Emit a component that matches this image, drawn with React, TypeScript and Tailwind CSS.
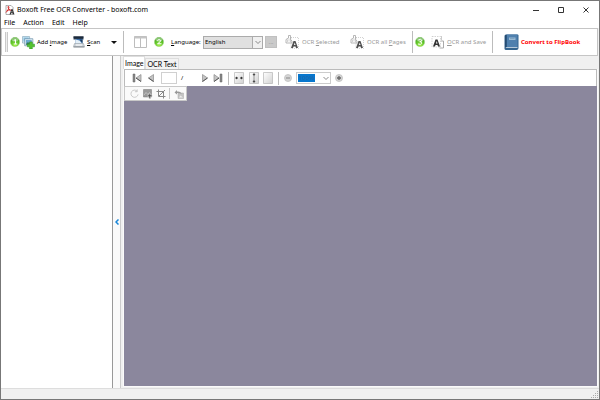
import React, { useState } from "react";

const menuFont = "font-['Noto_Sans','Open_Sans',sans-serif] text-[7px] leading-[10px] whitespace-nowrap";
const toolFont = "font-['Noto_Sans','Open_Sans',sans-serif] text-[6px] leading-[10px] whitespace-nowrap";
const tabFont = "font-['Lato','Noto_Sans',sans-serif] text-[7px] leading-[10px] whitespace-nowrap";

function HelpBadge({ n }: { n: string }) {
  return (
    <button aria-label={`Step ${n}`} className="h-[10px] w-[10px] shrink-0">
      <svg viewBox="0 0 20 20" className="block h-full w-full">
        <defs>
          <radialGradient id={`g${n}`} cx="50%" cy="85%" r="85%">
            <stop offset="0" stopColor="#a4f04c" />
            <stop offset="0.5" stopColor="#62c62a" />
            <stop offset="1" stopColor="#3f9a28" />
          </radialGradient>
        </defs>
        <circle cx="10" cy="10" r="9.3" fill={`url(#g${n})`} stroke="#a5d685" />
        <ellipse cx="10" cy="5.500" rx="6.500" ry="3.800" fill="#fff" opacity="0.35" />
        {n === "1" && <path d="M7.500 7l3.500-2v9M7.500 14h7" fill="none" stroke="#fff" strokeWidth="2" />}
        {n === "2" && <path d="M6.500 7q3.500-4 7 0q0 2.500-6.500 6.500h8" fill="none" stroke="#fff" strokeWidth="2" />}
        {n === "3" && <path d="M6.500 6q6-3 7 .5q0 3-4 3q5 0 4 3.500q-2 3-7.500 1" fill="none" stroke="#fff" strokeWidth="2" />}
      </svg>
    </button>
  );
}

function AppIcon() {
  return (
    <svg viewBox="0 0 20 20" className="h-[10px] w-[10px] shrink-0">
      <path d="M2 .8h10l4 4V19H2z" fill="#fff" stroke="#777" strokeWidth="1.200" />
      <path d="M6 3c4-1 1 7-4 12M6 3c0 5 3 8 9 8M3 12q5-3 8-2" fill="none" stroke="#d22424" strokeWidth="1.900" />
      <path d="M9 19l4-11h2l4 11h-3l-.7-2.500h-3L11.600 19zM13 14.500h2l-1-3.500z" fill="#333" />
    </svg>
  );
}

function AddImageIcon() {
  return (
    <svg viewBox="0 0 24 24" className="h-[13px] w-[13px] shrink-0">
      <path d="M1 1h13v12H1z" fill="#eaf5fb" stroke="#86aabd" strokeWidth="1.300" />
      <path d="M2.500 2.500h10v8h-10z" fill="#8ec5e3" />
      <path d="M5 5h15v13H5z" fill="#f2f9fd" stroke="#668fa7" strokeWidth="1.300" />
      <path d="M7 7h11v9H7z" fill="#6ca9ce" />
      <path d="M7 15l4-4 3 3 4-4v6H7z" fill="#3d7c59" />
      <path d="M14 11h5v4h4v5h-4v4h-5v-4h-4v-5h4z" fill="#56c42f" stroke="#2b9222" />
    </svg>
  );
}

function ScanIcon() {
  return (
    <svg viewBox="0 0 24 24" className="h-[12px] w-[12px] shrink-0">
      <path d="M1 1h20v6H1z" fill="#26384c" />
      <path d="M1 1h20v2H1z" fill="#111d2c" />
      <path d="M5 6h14v10H5z" fill="#3a6fae" />
      <path d="M5 7l8 2 6 7H5z" fill="#e3eff8" />
      <path d="M13 7h6v7z" fill="#21405f" />
      <path d="M3 15h18l2 6H1z" fill="#cfd6dc" stroke="#8b949b" />
      <path d="M6 17h12v2H6z" fill="#fff" />
      <path d="M1 21h22v2H1z" fill="#7d858c" />
    </svg>
  );
}

function SelectOcrIcon({ page = false }: { page?: boolean }) {
  return (
    <svg viewBox="0 0 28 28" className="h-[14px] w-[14px] shrink-0">
      {page ? (
        <g>
          <path d="M2 3h17v21H2z" fill="#fff" stroke="#a8a8a8" strokeDasharray="3 2" />
          <path d="M20 12h5v14h-8" fill="none" stroke="#aaa" strokeWidth="2" />
          <path d="M21 2v8" stroke="#bbb" strokeWidth="1.500" />
        </g>
      ) : (
        <g fill="none" stroke="#a5a5a5">
          <path d="M2 16V9l5-3V1h4v8l3 3v4z" strokeWidth="1.600" />
          <path d="M12 5h15v22H12z" strokeDasharray="2 2" />
          <path d="M5 9v5M8 7v6M11 9v5" />
        </g>
      )}
      <path transform={page ? "translate(-8 -3)" : undefined} d="M12 26l5-14h4l5 14h-4l-1-3h-4l-1 3zM18 20h3l-1.500-5z" fill={page ? "#333" : "#505050"} />
    </svg>
  );
}

function BookIcon() {
  return (
    <svg viewBox="0 0 30 34" className="h-[17px] w-[15px] shrink-0">
      <path d="M4 1h23q2 0 2 2v25q0 4-4 4H4q-3 0-3-3V4q0-3 3-3z" fill="#35658f" />
      <path d="M6 1h21v25H6z" fill="#4f80ae" />
      <path d="M2 4q0-2 3-3v26q-3 0-3 2z" fill="#254b71" />
      <path d="M3 28q0-2 3-2h21v2H5z" fill="#b7c9d9" />
      <path d="M10 7h13v5H10z" fill="#9abbd4" />
      <path d="M12 8h9v1h-9z" fill="#6089ae" />
    </svg>
  );
}

function Arrow({ back = false, bar = false }: { back?: boolean; bar?: boolean }) {
  return (
    <svg viewBox="0 0 20 20" className="block h-[10px] w-[10px]">
      <g transform={back ? "translate(20 0) scale(-1 1)" : undefined}>
        <path d={bar ? "M2 3l10 7-10 7z" : "M5 3l10 7-10 7z"} fill="#c4c4c4" stroke="#909090" strokeWidth="1.500" />
        <path d={bar ? "M2 17l10-7" : "M5 17l10-7"} stroke="#555" strokeWidth="2" />
        {bar && <path d="M14 2h4v16h-4z" fill="#888" stroke="#666" />}
      </g>
    </svg>
  );
}

function FitIcon({ kind }: { kind: "width" | "height" | "page" }) {
  return (
    <svg viewBox="0 0 20 24" className="block h-[12px] w-[10px]">
      <defs>
        <linearGradient id={kind} x1="0" y1="0" x2="1" y2="1">
          <stop offset="0" stopColor="#fff" />
          <stop offset="1" stopColor="#d2d2d2" />
        </linearGradient>
      </defs>
      <path d="M1 1h18v22H1z" fill={`url(#${kind})`} stroke="#b0b0b0" strokeWidth="1.300" />
      {kind === "width" && <path d="M2 12l4-3v2h2v2H6v2zM18 12l-4-3v2h-2v2h2v2z" fill="#333" />}
      {kind === "height" && <path d="M10 2l3 4h-2v3H9V6H7zM10 22l3-4h-2v-3H9v3H7zM9 11h2v2H9z" fill="#444" />}
    </svg>
  );
}

function ZoomIcon({ plus = false }: { plus?: boolean }) {
  return (
    <svg viewBox="0 0 16 16" className="block h-[8px] w-[8px]">
      <circle cx="8" cy="8" r="7" fill="#d5d5d5" stroke="#bdbdbd" strokeWidth="1.500" />
      <path d={plus ? "M4 8h8M8 4v8" : "M4 8h8"} stroke={plus ? "#666" : "#999"} strokeWidth="2.600" />
    </svg>
  );
}

function Chevron() {
  return (
    <svg viewBox="0 0 12 12" className="pointer-events-none h-[6px] w-[6px]">
      <path d="M1 4l5 5 5-5" fill="none" stroke="#666" strokeWidth="1.500" />
    </svg>
  );
}

function Separator() {
  return <div className="h-[22px] w-px shrink-0 bg-[#bcbcbc]" />;
}

function TitleBar() {
  return (
    <header className={`flex h-[17px] shrink-0 items-center bg-white pr-px pl-1 ${menuFont}`}>
      <AppIcon />
      <h1 className="ml-[2px] font-normal">Boxoft Free OCR Converter - boxoft.com</h1>
      <div className="ml-auto flex h-full">
        <button aria-label="Minimize" className="flex w-[25px] items-center justify-center">
          <svg viewBox="0 0 8 8" className="h-2 w-2"><path d="M1 4.500h6" stroke="#333" /></svg>
        </button>
        <button aria-label="Maximize" className="flex w-[25px] items-center justify-center">
          <svg viewBox="0 0 8 8" className="h-2 w-2"><path d="M1.500 1.500h5v5h-5z" fill="none" stroke="#333" /></svg>
        </button>
        <button aria-label="Close" className="flex w-[25px] items-center justify-center">
          <svg viewBox="0 0 8 8" className="h-2 w-2"><path d="M1.500 1.500l5 5m0-5l-5 5" stroke="#333" /></svg>
        </button>
      </div>
    </header>
  );
}

function MainToolbar() {
  return (
    <div className={`mr-px flex h-[28px] shrink-0 items-center border border-[#c5c5c5] bg-white pl-[3px] ${toolFont}`}>
      <div className="h-5 w-[3px] border-x border-[#c9c9c9] bg-[#eee]" />
      <div className="flex w-[115px] items-center pl-[2px]">
        <HelpBadge n="1" />
        <button className="ml-[2px] flex w-[51px] items-center gap-[2px]">
          <AddImageIcon />
          <span>Add <u>i</u>mage</span>
        </button>
        <button className="flex w-[38px] items-center gap-[2px]">
          <ScanIcon />
          <span><u>S</u>can</span>
        </button>
        <button aria-label="Scan options" className="h-[3px] w-[6px]">
          <svg viewBox="0 0 6 3" className="block h-full w-full"><path d="M0 0h6L3 3z" fill="#111" /></svg>
        </button>
      </div>
      <Separator />
      <button aria-label="Page layout" className="ml-[10px] h-[12px] w-[13px]">
        <svg viewBox="0 0 26 24" className="block h-full w-full">
          <path d="M1 1h24v22H1zM13 4v19" fill="#fff" stroke="#bdbdbd" strokeWidth="2" />
          <path d="M1 1h24v4H1z" fill="#c4c4c4" />
        </svg>
      </button>
      <div className="ml-[7px] flex w-[17px]"><HelpBadge n="2" /></div>
      <label htmlFor="language" className="w-[32px]"><u>L</u>anguage:</label>
      <div className="grid w-[60px] grid-cols-1">
        <select id="language" className="col-start-1 row-start-1 h-[13px] appearance-none rounded-none border border-[#ababab] bg-[#e0e0e0] pl-px">
          <option>English</option>
        </select>
        <div className="pointer-events-none col-start-1 row-start-1 flex w-[11px] items-center justify-center justify-self-end border border-[#ababab] bg-[#f0f0f0]">
          <Chevron />
        </div>
      </div>
      <button aria-label="Language settings" className="ml-[2px] h-[12px] w-[12px] border border-[#c0c0c0] bg-[#cacaca] leading-[6px] text-[#999]">...</button>
      <button className="ml-[8px] flex w-[65px] items-center gap-[3px] text-[#999]">
        <SelectOcrIcon />
        <span>OCR <u>S</u>elected</span>
      </button>
      <button className="flex w-[62px] items-center gap-[3px] text-[#999]">
        <SelectOcrIcon />
        <span>OCR all <u>P</u>ages</span>
      </button>
      <Separator />
      <div className="ml-[2px] flex w-[16px]"><HelpBadge n="3" /></div>
      <button className="flex w-[61px] items-center gap-[2px] text-[#999]">
        <SelectOcrIcon page />
        <span><u>O</u>CR and Save</span>
      </button>
      <Separator />
      <button className="ml-[11px] flex items-center gap-[2px] font-bold text-[#ff0000]">
        <BookIcon />
        <span>Convert to FlipBook</span>
      </button>
    </div>
  );
}

function PageToolbar() {
  return (
    <div className={`flex h-[17px] shrink-0 items-center border border-b-0 border-[#bbb] bg-white ${toolFont}`}>
      <button aria-label="First page" className="ml-[7px]"><Arrow back bar /></button>
      <button aria-label="Previous page" className="ml-[4px]"><Arrow back /></button>
      <input aria-label="Page number" className="ml-[5px] h-[12px] w-[16px] border border-[#d0d0d0] bg-white" />
      <span className="ml-[4px] w-[19px]">/</span>
      <button aria-label="Next page"><Arrow /></button>
      <button aria-label="Last page" className="ml-[3px]"><Arrow bar /></button>
      <div className="mx-[5px] h-[13px] w-px bg-[#bbb]" />
      <button aria-label="Fit width"><FitIcon kind="width" /></button>
      <button aria-label="Fit height" className="ml-[5px]"><FitIcon kind="height" /></button>
      <button aria-label="Fit page" className="ml-[4px]"><FitIcon kind="page" /></button>
      <div className="mx-[5px] h-[13px] w-px bg-[#bbb]" />
      <button aria-label="Zoom out"><ZoomIcon /></button>
      <div className="ml-[4px] grid w-[35px] grid-cols-1">
        <select aria-label="Zoom level" className="col-start-1 row-start-1 h-[12px] appearance-none rounded-none border border-[#ccc] bg-white pl-[3px] text-transparent">
          <option>100%</option>
        </select>
        <div className="pointer-events-none col-start-1 row-start-1 ml-[2px] h-[8px] w-[17px] self-center bg-[#0877ce] text-center leading-[8px] text-[#2465a2]">100%</div>
        <div className="pointer-events-none col-start-1 row-start-1 mr-[2px] self-center justify-self-end"><Chevron /></div>
      </div>
      <button aria-label="Zoom in" className="ml-[4px]"><ZoomIcon plus /></button>
    </div>
  );
}

function EditToolbar() {
  return (
    <div className="flex h-[15px] w-[63px] items-center border border-[#c8c8c8] bg-[#fafafa] pl-[5px]">
      <button aria-label="Rotate" className="h-[9px] w-[9px]">
        <svg viewBox="0 0 20 20" className="block h-full w-full"><path d="M16 5A8 8 0 1 0 18 12M16 1v5h-5" fill="none" stroke="#c0c0c0" strokeWidth="1.800" /></svg>
      </button>
      <button aria-label="Select region" className="ml-[4px] h-[10px] w-[10px]">
        <svg viewBox="0 0 20 20" className="block h-full w-full">
          <path d="M1 1h16v15H1z" fill="#999" stroke="#777" />
          <path d="M2 12l4-5 4 4 3-4 3 5" fill="none" stroke="#ccc" strokeWidth="1.500" />
          <path d="M12 9h3v3h3v3h-3v4h-3v-4H9v-3h3z" fill="#555" stroke="#ccc" />
        </svg>
      </button>
      <button aria-label="Crop" className="ml-[3px] h-[10px] w-[10px]">
        <svg viewBox="0 0 20 20" className="block h-full w-full"><path d="M5 1v14h14M1 5h14v14M6 14L18 2" fill="none" stroke="#888" strokeWidth="2" /></svg>
      </button>
      <div className="ml-[3px] h-[11px] w-px bg-[#c8c8c8]" />
      <button aria-label="Restore image" className="ml-[4px] h-[10px] w-[10px]">
        <svg viewBox="0 0 20 20" className="block h-full w-full">
          <path d="M8 8h11v11H8z" fill="#c4c4c4" stroke="#aaa" />
          <path d="M1 7l5-5v3q8-1 9 5-3-3-9-2v3z" fill="#999" />
          <path d="M10 17l3-4 5 4z" fill="#eee" />
        </svg>
      </button>
    </div>
  );
}

export default function App() {
  const [tab, setTab] = useState("Image");
  return (
    <div className="flex h-screen flex-col border border-[#777] bg-[#f0f0f0] text-black">
      <TitleBar />
      <nav className={`flex h-[10px] shrink-0 items-center gap-[8px] bg-white pl-[3px] ${menuFont}`}>
        <button>File</button>
        <button>Action</button>
        <button>Edit</button>
        <button>Help</button>
      </nav>
      <MainToolbar />
      <main className="flex min-h-0 flex-1">
        <aside aria-label="Page thumbnails" className="w-[112px] shrink-0 border-r border-[#999] bg-white" />
        <button aria-label="Collapse thumbnails" className="flex w-[8px] shrink-0 items-center justify-center border-r border-[#ccc] bg-[#fafafa]">
          <svg viewBox="0 0 4 6" className="h-[6px] w-[4px]"><path d="M3.500 .5L1 3l2.500 2.500" fill="none" stroke="#1785d8" strokeWidth="1.500" /></svg>
        </button>
        <section className="flex min-w-0 flex-1 flex-col pr-px pb-px pl-[2px]">
          <div role="tablist" className={`flex h-[13px] shrink-0 items-end ${tabFont}`}>
            {["Image", "OCR Text"].map((name) => (
              <button
                key={name}
                role="tab"
                aria-selected={tab === name}
                onClick={() => setTab(name)}
                className={`border-x border-t border-[#ddd] px-px ${tab === name ? "h-[13px] bg-white" : "h-[11px] bg-[#f3f3f3]"}`}
              >
                {name}
              </button>
            ))}
          </div>
          <div className="flex min-h-0 flex-1 flex-col border-x border-b border-[#fafafa] bg-[#8b879d]">
            <PageToolbar />
            <EditToolbar />
          </div>
        </section>
      </main>
      <footer className="flex h-[11px] shrink-0 items-end justify-end border-t border-[#ddd] bg-[#f0f0f0]">
        <svg viewBox="0 0 8 8" className="h-2 w-2"><path d="M6 0h1v1H6zM4 2h1v1H4zm2 0h1v1H6zM2 4h1v1H2zm2 0h1v1H4zm2 0h1v1H6zM0 6h1v1H0zm2 0h1v1H2zm2 0h1v1H4zm2 0h1v1H6z" fill="#aaa" /></svg>
      </footer>
    </div>
  );
}
